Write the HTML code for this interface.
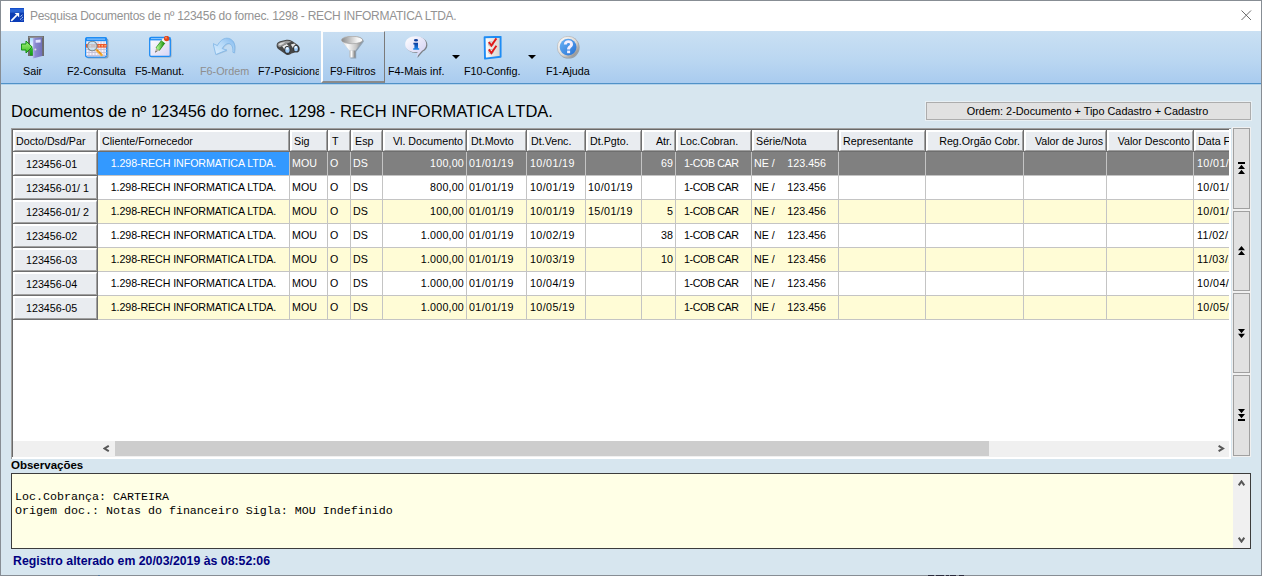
<!DOCTYPE html><html><head><meta charset="utf-8"><style>
*{margin:0;padding:0;box-sizing:border-box}
html,body{width:1276px;height:583px;overflow:hidden;background:#fff;font-family:"Liberation Sans",sans-serif;}
.a{position:absolute}
.t{position:absolute;white-space:nowrap;line-height:1}
</style></head><body>

<div class="a" style="left:0;top:0;width:1262px;height:576px;border:1px solid #878d94;background:#d7e6ef"></div>
<div class="a" style="left:1px;top:1px;width:1260px;height:30px;background:#fff"></div>
<svg class="a" style="left:10px;top:8px" width="14" height="14" viewBox="0 0 14 14">
<defs><linearGradient id="apg" x1="0" y1="0" x2="0" y2="1"><stop offset="0" stop-color="#0c44c4"/><stop offset="0.12" stop-color="#2a66d8"/><stop offset="0.3" stop-color="#2a62d0"/><stop offset="0.36" stop-color="#0c3cb0"/><stop offset="1" stop-color="#0a3cb8"/></linearGradient></defs>
<rect x="0" y="0" width="14" height="14" fill="url(#apg)"/>
<path d="M1.2 12.8 L6.8 7.2" stroke="#fff" stroke-width="1.7"/><path d="M4.6 5 L9.2 5 L9.2 9.6 Z" fill="#fff"/>
<path d="M10.5 8.5 L12.5 6.8 M10 11.5 L11.5 10.5 M12 12.5 L13 11.5 M11.8 9.8 L13 9" stroke="#b8d0f8" stroke-width="1"/>
</svg>
<div class="t" style="left:30px;top:10px;font-size:12px;letter-spacing:-0.28px;color:#939393">Pesquisa Documentos de nº 123456 do fornec. 1298 - RECH INFORMATICA LTDA.</div>
<svg class="a" style="left:1241px;top:10px" width="11" height="11" viewBox="0 0 11 11"><path d="M0.5 0.5 L10 10 M10 0.5 L0.5 10" stroke="#6a6a6a" stroke-width="1"/></svg>
<div class="a" style="left:1px;top:31px;width:1260px;height:52px;background:linear-gradient(#cae0f3,#b9d6f1 60%,#a9cbef)"></div>
<div class="a" style="left:1px;top:83px;width:1260px;height:1px;background:#5092c8"></div><div class="a" style="left:1px;top:84px;width:1260px;height:1px;background:#b4d2ea"></div><div class="a" style="left:1px;top:85px;width:1260px;height:1px;background:#d8e8f1"></div>
<div class="a" style="left:321px;top:31px;width:64px;height:52px;border-left:2px solid #fdfdfd;border-top:1px solid #fdfdfd;border-right:1px solid #7a7a7a;border-bottom:2px solid #8a8a8a;background:linear-gradient(#c8def2,#a9cbee)"></div>
<div class="t" style="left:23px;top:66px;font-size:10.8px;color:#000">Sair</div>
<div class="t" style="left:67px;top:66px;font-size:10.8px;color:#000">F2-Consulta</div>
<div class="t" style="left:135px;top:66px;font-size:10.8px;color:#000">F5-Manut.</div>
<div class="t" style="left:200px;top:66px;font-size:10.8px;color:#8e8e8e">F6-Ordem</div>
<div class="t" style="left:258px;top:66px;width:61px;overflow:hidden;font-size:10.8px;color:#000">F7-Posiciona</div>
<div class="t" style="left:330px;top:66px;font-size:10.8px;color:#000">F9-Filtros</div>
<div class="t" style="left:388px;top:66px;font-size:10.8px;color:#000">F4-Mais inf.</div>
<div class="t" style="left:464px;top:66px;font-size:10.8px;color:#000">F10-Config.</div>
<div class="t" style="left:546px;top:66px;font-size:10.8px;color:#000">F1-Ajuda</div>
<svg class="a" style="left:452px;top:55px" width="8" height="4" viewBox="0 0 8 4"><path d="M0 0 L8 0 L4 4 Z" fill="#000"/></svg>
<svg class="a" style="left:528px;top:55px" width="8" height="4" viewBox="0 0 8 4"><path d="M0 0 L8 0 L4 4 Z" fill="#000"/></svg>
<div class="a" style="left:21px;top:36px"><svg width="24" height="24" viewBox="0 0 24 24">
<defs><linearGradient id="op" x1="0" y1="0" x2="0" y2="1"><stop offset="0" stop-color="#a8dcff"/><stop offset="0.5" stop-color="#f4fbff"/><stop offset="0.62" stop-color="#2fb52f"/><stop offset="1" stop-color="#129a12"/></linearGradient>
<linearGradient id="dr" x1="0" y1="0" x2="1" y2="0"><stop offset="0" stop-color="#b4b4ec"/><stop offset="0.25" stop-color="#8a8ad0"/><stop offset="1" stop-color="#7070b8"/></linearGradient>
<linearGradient id="ar" x1="0" y1="0" x2="0" y2="1"><stop offset="0" stop-color="#a8f080"/><stop offset="1" stop-color="#3cc020"/></linearGradient></defs>
<rect x="7" y="0" width="16" height="20" fill="#6c6c6c"/><rect x="7.6" y="0.6" width="14" height="1.2" fill="#9a9a9a"/>
<rect x="9" y="2" width="3.5" height="17.5" fill="url(#op)"/>
<path d="M11.9 2 L21 1.2 L21.2 20 L11.9 22.5 Z" fill="url(#dr)"/>
<path d="M14.6 4 L19.6 3.6 L19.6 6.4 L14.6 6.8 Z" fill="#e4e4ff"/>
<circle cx="14.4" cy="13.6" r="1" fill="#e6e6e6"/>
<path d="M0.4 8 L5 8 L5 5 L11.2 11 L5 17 L5 14 L0.4 14 Z" fill="url(#ar)" stroke="#0f8f0f" stroke-width="1"/>
</svg></div>
<div class="a" style="left:85px;top:37px"><svg width="24" height="22" viewBox="0 0 24 22">
<rect x="1.5" y="1.5" width="22" height="20" rx="2" fill="#5a6a7a" fill-opacity="0.45"/>
<rect x="0.6" y="0.6" width="21" height="19.5" rx="1.8" fill="#f6f2fc" stroke="#1e8cf4" stroke-width="1.3"/>
<rect x="0.6" y="0.6" width="21" height="3.6" fill="#1e8cf4"/><rect x="2" y="1.6" width="18" height="1" fill="#9fd0ff"/>
<path d="M1 8.5 H21.5 M1 12.5 H21.5 M1 15.5 H21.5 M1 18.5 H21.5 M4 4 V20 M7 4 V20 M10 4 V20 M13 4 V20 M16 4 V20 M19 4 V20" stroke="#c4bfd6" stroke-width="0.9"/>
<rect x="1" y="7" width="20.6" height="3.6" fill="#f0582a"/>
<path d="M4.5 8 h1.5 v1.6 h-1.5 Z M10.5 8 h1.5 v1.6 h-1.5 Z M13.5 8 h1.5 v1.6 h-1.5 Z M16.5 8 h1.5 v1.6 h-1.5 Z M19.5 8 h1.2 v1.6 h-1.2 Z" fill="#f9c08a"/>
<circle cx="7.3" cy="9" r="4.8" fill="#bfe3f4" fill-opacity="0.75" stroke="#7f8a90" stroke-width="1.1"/>
<path d="M11.8 13.2 L16.6 17.8" stroke="#f2b030" stroke-width="2.5" stroke-linecap="round"/>
<path d="M12.4 13.4 L16.4 17.2" stroke="#e84a20" stroke-width="1" stroke-dasharray="1 1.1"/>
</svg></div>
<div class="a" style="left:149px;top:36px"><svg width="24" height="23" viewBox="0 0 24 23">
<rect x="1.5" y="2.5" width="21" height="19" rx="1.5" fill="#5a6a7a" fill-opacity="0.45"/>
<defs><linearGradient id="pg" x1="0" y1="0" x2="1" y2="1"><stop offset="0" stop-color="#ffffff"/><stop offset="1" stop-color="#d8d4f4"/></linearGradient>
<linearGradient id="gb" x1="0" y1="0" x2="1" y2="0"><stop offset="0" stop-color="#a8f48a"/><stop offset="1" stop-color="#2a9a1a"/></linearGradient></defs>
<rect x="0.7" y="1.4" width="20.6" height="19" rx="1.5" fill="url(#pg)" stroke="#1e8cf4" stroke-width="1.3"/>
<rect x="0.7" y="1.4" width="20.6" height="3" fill="#1e8cf4"/><rect x="2" y="2.2" width="17" height="0.9" fill="#9fd0ff"/>
<path d="M6.2 16.4 L7 12.2 L10.2 14.4 Z" fill="#b8b0a0"/><path d="M6 16.8 L6.8 14.8 L7.8 15.6 Z" fill="#444"/>
<path d="M8.6 13.2 L14.4 5.6" stroke="#2a8a1a" stroke-width="5"/>
<path d="M8.6 13.2 L14.4 5.6" stroke="url(#gb)" stroke-width="3.6"/>
<path d="M14.2 5.8 L16 3.6" stroke="#f4f4f4" stroke-width="4.8"/>
<circle cx="17.6" cy="2.5" r="2.7" fill="#e2481c"/><circle cx="17" cy="1.8" r="1" fill="#f88a60"/>
</svg></div>
<div class="a" style="left:213px;top:37px"><svg width="24" height="22" viewBox="0 0 24 22">
<defs><linearGradient id="ua" x1="0" y1="1" x2="1" y2="0"><stop offset="0" stop-color="#dcefff"/><stop offset="0.55" stop-color="#b4d8f8"/><stop offset="1" stop-color="#80b8ee"/></linearGradient></defs>
<path d="M0.9 7.4 L5.2 9.4 C7.3 5.3 10.8 2 14.7 2 C19.3 2 22.6 5.8 22.6 10.8 C22.6 13.3 22.3 15.3 22.1 16.6 L20.7 16.1 C20.9 13.8 20.7 9.6 18.4 8 C16.6 6.6 13 7 10 12.4 L14.7 13.9 L3.6 18.3 Z" fill="#7a9ab8" fill-opacity="0.35"/>
<path d="M0.1 6.6 L4.4 8.6 C6.5 4.5 10 1.2 13.9 1.2 C18.5 1.2 21.8 5 21.8 10 C21.8 12.5 21.5 14.5 21.3 15.8 L19.9 15.3 C20.1 13 19.9 8.8 17.6 7.2 C15.8 5.8 12.2 6.2 9.2 11.6 L13.9 13.1 L2.8 17.5 Z" fill="url(#ua)" stroke="#7cb4e6" stroke-width="0.8" stroke-linejoin="round"/>
</svg></div>
<div class="a" style="left:274px;top:35px"><svg width="28" height="22" viewBox="0 0 28 22">
<path d="M2.6 10.5 C2.6 8.4 4 6.8 6 6.2 L12.5 4.8 C14.5 4.6 16.5 5 18.5 6.2 L23.5 9.7 C25.5 11.2 26 13.2 25.6 15.2 C25 17.4 23 18 21 17.4 L17.5 18.6 C16 20.2 13.5 20.4 12 19.4 L4.5 14.2 C3.2 13.2 2.6 12 2.6 10.5 Z" fill="#464646"/>
<path d="M3.6 10 C3.8 8.4 5 7.6 6.6 7.2 L12.6 5.8 C14.4 5.6 16 6 17.4 6.8 L13.2 8.4 L8.6 10.8 L5.8 12.2 C4.5 11.6 3.6 11 3.6 10 Z" fill="#9a9a9a"/>
<path d="M4.6 9.6 C5 8.6 6 8.1 7.4 7.8 L11.2 7 L9 9 L6 10.6 Z" fill="#dadada"/>
<path d="M8.2 11.2 L12.8 9 L16 12.4 L12 16.4 Z" fill="#ededed"/>
<path d="M16.8 9.4 L20.4 8.4 L23 11.4 L19.8 14.4 Z" fill="#e6e6e6"/>
<ellipse cx="13.3" cy="14.9" rx="3" ry="3.8" fill="#2e2e2e"/>
<ellipse cx="13.4" cy="14.9" rx="2.2" ry="2.9" fill="#9ecbf8"/><ellipse cx="13.2" cy="13.5" rx="1.3" ry="1.3" fill="#eaf5ff"/>
<ellipse cx="21.9" cy="13.5" rx="2.8" ry="3.5" fill="#2e2e2e"/>
<ellipse cx="22" cy="13.5" rx="2" ry="2.7" fill="#9ecbf8"/><ellipse cx="21.8" cy="12.2" rx="1.2" ry="1.2" fill="#eaf5ff"/>
</svg></div>
<div class="a" style="left:341px;top:36px"><svg width="25" height="24" viewBox="0 0 25 24">
<defs><linearGradient id="cn" x1="0" y1="0" x2="1" y2="0"><stop offset="0" stop-color="#d8d8d8"/><stop offset="0.3" stop-color="#fafafa"/><stop offset="0.7" stop-color="#c4c4c4"/><stop offset="1" stop-color="#7a7a7a"/></linearGradient>
<linearGradient id="sp" x1="0" y1="0" x2="1" y2="0"><stop offset="0" stop-color="#b8b8b8"/><stop offset="0.35" stop-color="#fafafa"/><stop offset="1" stop-color="#7a7a7a"/></linearGradient>
<linearGradient id="in" x1="0" y1="0" x2="1" y2="0"><stop offset="0" stop-color="#8a8a8a"/><stop offset="0.75" stop-color="#f4f4f4"/><stop offset="1" stop-color="#ffffff"/></linearGradient></defs>
<path d="M1.3 5.5 C1.3 3 6 1 12.1 1 C18.2 1 22.9 3 22.9 5.5 L15.2 15.8 L15.2 22.5 L9.5 22.5 L9.5 15.8 Z" fill="#404040" fill-opacity="0.35"/>
<path d="M0.3 4.5 C0.3 2 5 0.1 11.1 0.1 C17.2 0.1 21.9 2 21.9 4.5 L14.2 14.8 L8.5 14.8 Z" fill="url(#cn)"/>
<ellipse cx="11.1" cy="4" rx="10.6" ry="3.7" fill="url(#in)" stroke="#9a9a9a" stroke-width="0.6"/>
<path d="M8.5 14.6 L14.2 14.6 L14.2 21.5 L8.5 21.5 Z" fill="url(#sp)"/>
</svg></div>
<div class="a" style="left:405px;top:36px"><svg width="24" height="23" viewBox="0 0 24 23">
<defs><linearGradient id="bb" x1="0" y1="0" x2="1" y2="1"><stop offset="0" stop-color="#ffffff"/><stop offset="1" stop-color="#cfcdf2"/></linearGradient>
<linearGradient id="ib" x1="0" y1="0" x2="0" y2="1"><stop offset="0" stop-color="#0a3a9a"/><stop offset="1" stop-color="#1c8cf0"/></linearGradient></defs>
<path d="M11.8 1 C18 1 22.4 4 22.4 9 C22.4 12.2 20.4 14.4 18 15.6 L12.4 22 L13.6 17 C6 17.4 1 14 1 9 C1 4 5.6 1 11.8 1 Z" fill="#6a6a6a" fill-opacity="0.8"/>
<path d="M10.8 0.2 C17 0.2 21.2 3.2 21.2 8.2 C21.2 11.4 19.2 13.6 17 14.8 L11.2 21.2 L12.6 16.2 C5 16.6 0.2 13.2 0.2 8.2 C0.2 3.2 4.6 0.2 10.8 0.2 Z" fill="url(#bb)"/>
<ellipse cx="11" cy="4.3" rx="2.1" ry="1.3" fill="#0c3f9e"/>
<path d="M8.4 6.8 H13 V12.2 H14.2 V13.8 H8.2 V12.2 H9.4 V8.4 H8.4 Z" fill="url(#ib)"/>
</svg></div>
<div class="a" style="left:483px;top:36px"><svg width="20" height="24" viewBox="0 0 20 24">
<defs><linearGradient id="ck" x1="0" y1="0" x2="1" y2="0"><stop offset="0" stop-color="#ffffff"/><stop offset="0.5" stop-color="#ebe7e3"/><stop offset="1" stop-color="#d8d4d0"/></linearGradient></defs>
<path d="M1.6 1.2 L17.6 0.8 L17.6 20.8 L2 22.6 Z" fill="url(#ck)" stroke="#1e8cf4" stroke-width="1.9" stroke-linejoin="round"/>
<ellipse cx="8" cy="8" rx="2.6" ry="2.2" fill="none" stroke="#b8b8b8" stroke-width="0.9"/>
<ellipse cx="8" cy="15.6" rx="2.6" ry="2.2" fill="none" stroke="#b8b8b8" stroke-width="0.9"/>
<path d="M5.8 6 L8.4 9.6 L13.4 2.4" stroke="#e01a1a" stroke-width="1.9" fill="none"/>
<path d="M5.8 13.4 L8.4 17 L13.4 9.8" stroke="#e01a1a" stroke-width="1.9" fill="none"/>
</svg></div>
<div class="a" style="left:557px;top:36px"><svg width="24" height="24" viewBox="0 0 24 24">
<defs><linearGradient id="rg" x1="0" y1="0" x2="1" y2="1"><stop offset="0" stop-color="#ffffff"/><stop offset="0.55" stop-color="#dedad6"/><stop offset="1" stop-color="#707070"/></linearGradient>
<linearGradient id="hb" x1="0" y1="0" x2="1" y2="1"><stop offset="0" stop-color="#6cb4f6"/><stop offset="1" stop-color="#2470d4"/></linearGradient></defs>
<circle cx="11.6" cy="11.6" r="11" fill="#5a5a5a" fill-opacity="0.45"/>
<circle cx="11.1" cy="11.1" r="10.8" fill="url(#rg)" stroke="#a8a8a8" stroke-width="0.5"/>
<circle cx="11.1" cy="11.1" r="8.4" fill="url(#hb)"/>
<path d="M6.9 8.4 C6.9 5.4 9 4.2 11.4 4.2 C14.2 4.2 16 5.8 16 8.2 C16 11.2 13.1 11.4 13.1 13.6 L10.1 13.6 C10.1 10 13 9.8 13 8.3 C13 7.5 12.4 7 11.4 7 C10.4 7 9.8 7.6 9.8 8.6 Z" fill="#f4f0ff"/>
<rect x="10.1" y="14.6" width="3" height="2.6" fill="#f4f0ff"/>
</svg></div>
<div class="t" style="left:11px;top:103px;font-size:16.5px;color:#000">Documentos de nº 123456 do fornec. 1298 - RECH INFORMATICA LTDA.</div>
<div class="a" style="left:926px;top:102px;width:325px;height:18px;border:1px solid #adadad;background:#e1e1e1;box-shadow:0 0 0 1px #e9f0f4"></div>
<div class="t" style="left:925px;top:106px;width:325px;text-align:center;font-size:10.9px;color:#000">Ordem: 2-Documento + Tipo Cadastro + Cadastro</div>
<div class="a" style="left:11px;top:128px;width:1220px;height:331px;background:#fff;border-top:1px solid #a0a0a0;border-left:1px solid #a0a0a0"></div>
<div class="a" style="left:12px;top:129px;width:1217px;height:1px;background:#696969"></div><div class="a" style="left:12px;top:129px;width:1px;height:328px;background:#696969"></div>
<div class="a" id="gridclip" style="left:13px;top:130px;width:1216px;height:310px;overflow:hidden">
<div class="a" style="left:0px;top:0px;width:84px;height:21px;background:#e9ecf0;border-left:2px solid #fff;border-top:2px solid #fff;border-right:1px solid #a0a0a0;border-bottom:1px solid #a0a0a0"></div>
<div class="a" style="left:84px;top:0px;width:1px;height:22px;background:#6e6e6e"></div>
<div class="t" style="left:3px;top:6px;font-size:10.7px;color:#000;">Docto/Dsd/Par</div>
<div class="a" style="left:85px;top:0px;width:191px;height:21px;background:#e9ecf0;border-left:2px solid #fff;border-top:2px solid #fff;border-right:1px solid #a0a0a0;border-bottom:1px solid #a0a0a0"></div>
<div class="a" style="left:276px;top:0px;width:1px;height:22px;background:#6e6e6e"></div>
<div class="t" style="left:89px;top:6px;font-size:10.7px;color:#000;">Cliente/Fornecedor</div>
<div class="a" style="left:277px;top:0px;width:37px;height:21px;background:#e9ecf0;border-left:2px solid #fff;border-top:2px solid #fff;border-right:1px solid #a0a0a0;border-bottom:1px solid #a0a0a0"></div>
<div class="a" style="left:314px;top:0px;width:1px;height:22px;background:#6e6e6e"></div>
<div class="t" style="left:281px;top:6px;font-size:10.7px;color:#000;">Sig</div>
<div class="a" style="left:315px;top:0px;width:22px;height:21px;background:#e9ecf0;border-left:2px solid #fff;border-top:2px solid #fff;border-right:1px solid #a0a0a0;border-bottom:1px solid #a0a0a0"></div>
<div class="a" style="left:337px;top:0px;width:1px;height:22px;background:#6e6e6e"></div>
<div class="t" style="left:319px;top:6px;font-size:10.7px;color:#000;">T</div>
<div class="a" style="left:338px;top:0px;width:31px;height:21px;background:#e9ecf0;border-left:2px solid #fff;border-top:2px solid #fff;border-right:1px solid #a0a0a0;border-bottom:1px solid #a0a0a0"></div>
<div class="a" style="left:369px;top:0px;width:1px;height:22px;background:#6e6e6e"></div>
<div class="t" style="left:342px;top:6px;font-size:10.7px;color:#000;">Esp</div>
<div class="a" style="left:370px;top:0px;width:83px;height:21px;background:#e9ecf0;border-left:2px solid #fff;border-top:2px solid #fff;border-right:1px solid #a0a0a0;border-bottom:1px solid #a0a0a0"></div>
<div class="a" style="left:453px;top:0px;width:1px;height:22px;background:#6e6e6e"></div>
<div class="t" style="left:370px;width:80px;text-align:right;top:6px;font-size:10.7px;color:#000;">Vl. Documento</div>
<div class="a" style="left:454px;top:0px;width:59px;height:21px;background:#e9ecf0;border-left:2px solid #fff;border-top:2px solid #fff;border-right:1px solid #a0a0a0;border-bottom:1px solid #a0a0a0"></div>
<div class="a" style="left:513px;top:0px;width:1px;height:22px;background:#6e6e6e"></div>
<div class="t" style="left:458px;top:6px;font-size:10.7px;color:#000;">Dt.Movto</div>
<div class="a" style="left:514px;top:0px;width:58px;height:21px;background:#e9ecf0;border-left:2px solid #fff;border-top:2px solid #fff;border-right:1px solid #a0a0a0;border-bottom:1px solid #a0a0a0"></div>
<div class="a" style="left:572px;top:0px;width:1px;height:22px;background:#6e6e6e"></div>
<div class="t" style="left:518px;top:6px;font-size:10.7px;color:#000;">Dt.Venc.</div>
<div class="a" style="left:573px;top:0px;width:55px;height:21px;background:#e9ecf0;border-left:2px solid #fff;border-top:2px solid #fff;border-right:1px solid #a0a0a0;border-bottom:1px solid #a0a0a0"></div>
<div class="a" style="left:628px;top:0px;width:1px;height:22px;background:#6e6e6e"></div>
<div class="t" style="left:577px;top:6px;font-size:10.7px;color:#000;">Dt.Pgto.</div>
<div class="a" style="left:629px;top:0px;width:33px;height:21px;background:#e9ecf0;border-left:2px solid #fff;border-top:2px solid #fff;border-right:1px solid #a0a0a0;border-bottom:1px solid #a0a0a0"></div>
<div class="a" style="left:662px;top:0px;width:1px;height:22px;background:#6e6e6e"></div>
<div class="t" style="left:629px;width:30px;text-align:right;top:6px;font-size:10.7px;color:#000;">Atr.</div>
<div class="a" style="left:663px;top:0px;width:75px;height:21px;background:#e9ecf0;border-left:2px solid #fff;border-top:2px solid #fff;border-right:1px solid #a0a0a0;border-bottom:1px solid #a0a0a0"></div>
<div class="a" style="left:738px;top:0px;width:1px;height:22px;background:#6e6e6e"></div>
<div class="t" style="left:667px;top:6px;font-size:10.7px;color:#000;">Loc.Cobran.</div>
<div class="a" style="left:739px;top:0px;width:86px;height:21px;background:#e9ecf0;border-left:2px solid #fff;border-top:2px solid #fff;border-right:1px solid #a0a0a0;border-bottom:1px solid #a0a0a0"></div>
<div class="a" style="left:825px;top:0px;width:1px;height:22px;background:#6e6e6e"></div>
<div class="t" style="left:743px;top:6px;font-size:10.7px;color:#000;">Série/Nota</div>
<div class="a" style="left:826px;top:0px;width:86px;height:21px;background:#e9ecf0;border-left:2px solid #fff;border-top:2px solid #fff;border-right:1px solid #a0a0a0;border-bottom:1px solid #a0a0a0"></div>
<div class="a" style="left:912px;top:0px;width:1px;height:22px;background:#6e6e6e"></div>
<div class="t" style="left:830px;top:6px;font-size:10.7px;color:#000;">Representante</div>
<div class="a" style="left:913px;top:0px;width:97px;height:21px;background:#e9ecf0;border-left:2px solid #fff;border-top:2px solid #fff;border-right:1px solid #a0a0a0;border-bottom:1px solid #a0a0a0"></div>
<div class="a" style="left:1010px;top:0px;width:1px;height:22px;background:#6e6e6e"></div>
<div class="t" style="left:913px;width:94px;text-align:right;top:6px;font-size:10.7px;color:#000;">Reg.Orgão Cobr.</div>
<div class="a" style="left:1011px;top:0px;width:82px;height:21px;background:#e9ecf0;border-left:2px solid #fff;border-top:2px solid #fff;border-right:1px solid #a0a0a0;border-bottom:1px solid #a0a0a0"></div>
<div class="a" style="left:1093px;top:0px;width:1px;height:22px;background:#6e6e6e"></div>
<div class="t" style="left:1011px;width:79px;text-align:right;top:6px;font-size:10.7px;color:#000;">Valor de Juros</div>
<div class="a" style="left:1094px;top:0px;width:86px;height:21px;background:#e9ecf0;border-left:2px solid #fff;border-top:2px solid #fff;border-right:1px solid #a0a0a0;border-bottom:1px solid #a0a0a0"></div>
<div class="a" style="left:1180px;top:0px;width:1px;height:22px;background:#6e6e6e"></div>
<div class="t" style="left:1094px;width:83px;text-align:right;top:6px;font-size:10.7px;color:#000;">Valor Desconto</div>
<div class="a" style="left:1181px;top:0px;width:95px;height:21px;background:#e9ecf0;border-left:2px solid #fff;border-top:2px solid #fff;border-right:1px solid #a0a0a0;border-bottom:1px solid #a0a0a0"></div>
<div class="a" style="left:1276px;top:0px;width:1px;height:22px;background:#6e6e6e"></div>
<div class="t" style="left:1185px;top:6px;font-size:10.7px;color:#000;">Data F</div>
<div class="a" style="left:0px;top:21px;width:1277px;height:1px;background:#6e6e6e"></div>
<div class="a" style="left:0px;top:22px;width:84px;height:23px;background:#e9ecf0;border-left:2px solid #fff;border-top:2px solid #fff;border-right:1px solid #a0a0a0;border-bottom:1px solid #a0a0a0"></div>
<div class="a" style="left:84px;top:22px;width:1px;height:24px;background:#6e6e6e"></div>
<div class="a" style="left:0px;top:45px;width:85px;height:1px;background:#6e6e6e"></div>
<div class="t" style="left:13px;top:29px;font-size:10.7px;color:#000;">123456-01</div>
<div class="a" style="left:85px;top:22px;width:191px;height:23px;background:#3399ff"></div>
<div class="a" style="left:276px;top:22px;width:1px;height:24px;background:#c4c4c4"></div>
<div class="a" style="left:85px;top:45px;width:192px;height:1px;background:#c4c4c4"></div>
<div class="t" style="left:85px;width:191px;text-align:center;top:28px;font-size:10.7px;color:#fff;letter-spacing:-0.1px">1.298-RECH INFORMATICA LTDA.</div>
<div class="a" style="left:277px;top:22px;width:37px;height:23px;background:#808080"></div>
<div class="a" style="left:314px;top:22px;width:1px;height:24px;background:#c4c4c4"></div>
<div class="a" style="left:277px;top:45px;width:38px;height:1px;background:#c4c4c4"></div>
<div class="t" style="left:279px;top:28px;font-size:10.7px;color:#fff;">MOU</div>
<div class="a" style="left:315px;top:22px;width:22px;height:23px;background:#808080"></div>
<div class="a" style="left:337px;top:22px;width:1px;height:24px;background:#c4c4c4"></div>
<div class="a" style="left:315px;top:45px;width:23px;height:1px;background:#c4c4c4"></div>
<div class="t" style="left:317px;top:28px;font-size:10.7px;color:#fff;">O</div>
<div class="a" style="left:338px;top:22px;width:31px;height:23px;background:#808080"></div>
<div class="a" style="left:369px;top:22px;width:1px;height:24px;background:#c4c4c4"></div>
<div class="a" style="left:338px;top:45px;width:32px;height:1px;background:#c4c4c4"></div>
<div class="t" style="left:340px;top:28px;font-size:10.7px;color:#fff;">DS</div>
<div class="a" style="left:370px;top:22px;width:83px;height:23px;background:#808080"></div>
<div class="a" style="left:453px;top:22px;width:1px;height:24px;background:#c4c4c4"></div>
<div class="a" style="left:370px;top:45px;width:84px;height:1px;background:#c4c4c4"></div>
<div class="t" style="left:370px;width:81px;text-align:right;top:28px;font-size:10.7px;color:#fff;letter-spacing:0.2px">100,00</div>
<div class="a" style="left:454px;top:22px;width:59px;height:23px;background:#808080"></div>
<div class="a" style="left:513px;top:22px;width:1px;height:24px;background:#c4c4c4"></div>
<div class="a" style="left:454px;top:45px;width:60px;height:1px;background:#c4c4c4"></div>
<div class="t" style="left:456px;top:28px;font-size:10.7px;color:#fff;letter-spacing:0.4px">01/01/19</div>
<div class="a" style="left:514px;top:22px;width:58px;height:23px;background:#808080"></div>
<div class="a" style="left:572px;top:22px;width:1px;height:24px;background:#c4c4c4"></div>
<div class="a" style="left:514px;top:45px;width:59px;height:1px;background:#c4c4c4"></div>
<div class="t" style="left:517px;top:28px;font-size:10.7px;color:#fff;letter-spacing:0.4px">10/01/19</div>
<div class="a" style="left:573px;top:22px;width:55px;height:23px;background:#808080"></div>
<div class="a" style="left:628px;top:22px;width:1px;height:24px;background:#c4c4c4"></div>
<div class="a" style="left:573px;top:45px;width:56px;height:1px;background:#c4c4c4"></div>
<div class="a" style="left:629px;top:22px;width:33px;height:23px;background:#808080"></div>
<div class="a" style="left:662px;top:22px;width:1px;height:24px;background:#c4c4c4"></div>
<div class="a" style="left:629px;top:45px;width:34px;height:1px;background:#c4c4c4"></div>
<div class="t" style="left:629px;width:31px;text-align:right;top:28px;font-size:10.7px;color:#fff;">69</div>
<div class="a" style="left:663px;top:22px;width:75px;height:23px;background:#808080"></div>
<div class="a" style="left:738px;top:22px;width:1px;height:24px;background:#c4c4c4"></div>
<div class="a" style="left:663px;top:45px;width:76px;height:1px;background:#c4c4c4"></div>
<div class="t" style="left:671px;top:28px;font-size:10.7px;color:#fff;letter-spacing:-0.4px">1-COB CAR</div>
<div class="a" style="left:739px;top:22px;width:86px;height:23px;background:#808080"></div>
<div class="a" style="left:825px;top:22px;width:1px;height:24px;background:#c4c4c4"></div>
<div class="a" style="left:739px;top:45px;width:87px;height:1px;background:#c4c4c4"></div>
<div class="t" style="left:741px;top:28px;font-size:10.7px;color:#fff;">NE /</div>
<div class="t" style="left:739px;width:74px;text-align:right;top:28px;font-size:10.7px;color:#fff;">123.456</div>
<div class="a" style="left:826px;top:22px;width:86px;height:23px;background:#808080"></div>
<div class="a" style="left:912px;top:22px;width:1px;height:24px;background:#c4c4c4"></div>
<div class="a" style="left:826px;top:45px;width:87px;height:1px;background:#c4c4c4"></div>
<div class="a" style="left:913px;top:22px;width:97px;height:23px;background:#808080"></div>
<div class="a" style="left:1010px;top:22px;width:1px;height:24px;background:#c4c4c4"></div>
<div class="a" style="left:913px;top:45px;width:98px;height:1px;background:#c4c4c4"></div>
<div class="a" style="left:1011px;top:22px;width:82px;height:23px;background:#808080"></div>
<div class="a" style="left:1093px;top:22px;width:1px;height:24px;background:#c4c4c4"></div>
<div class="a" style="left:1011px;top:45px;width:83px;height:1px;background:#c4c4c4"></div>
<div class="a" style="left:1094px;top:22px;width:86px;height:23px;background:#808080"></div>
<div class="a" style="left:1180px;top:22px;width:1px;height:24px;background:#c4c4c4"></div>
<div class="a" style="left:1094px;top:45px;width:87px;height:1px;background:#c4c4c4"></div>
<div class="a" style="left:1181px;top:22px;width:95px;height:23px;background:#808080"></div>
<div class="a" style="left:1276px;top:22px;width:1px;height:24px;background:#c4c4c4"></div>
<div class="a" style="left:1181px;top:45px;width:96px;height:1px;background:#c4c4c4"></div>
<div class="t" style="left:1184px;top:28px;font-size:10.7px;color:#fff;letter-spacing:0.4px">10/01/19</div>
<div class="a" style="left:0px;top:46px;width:84px;height:23px;background:#e9ecf0;border-left:2px solid #fff;border-top:2px solid #fff;border-right:1px solid #a0a0a0;border-bottom:1px solid #a0a0a0"></div>
<div class="a" style="left:84px;top:46px;width:1px;height:24px;background:#6e6e6e"></div>
<div class="a" style="left:0px;top:69px;width:85px;height:1px;background:#6e6e6e"></div>
<div class="t" style="left:13px;top:53px;font-size:10.7px;color:#000;">123456-01/ 1</div>
<div class="a" style="left:85px;top:46px;width:191px;height:23px;background:#ffffff"></div>
<div class="a" style="left:276px;top:46px;width:1px;height:24px;background:#c4c4c4"></div>
<div class="a" style="left:85px;top:69px;width:192px;height:1px;background:#c4c4c4"></div>
<div class="t" style="left:85px;width:191px;text-align:center;top:52px;font-size:10.7px;color:#000;letter-spacing:-0.1px">1.298-RECH INFORMATICA LTDA.</div>
<div class="a" style="left:277px;top:46px;width:37px;height:23px;background:#ffffff"></div>
<div class="a" style="left:314px;top:46px;width:1px;height:24px;background:#c4c4c4"></div>
<div class="a" style="left:277px;top:69px;width:38px;height:1px;background:#c4c4c4"></div>
<div class="t" style="left:279px;top:52px;font-size:10.7px;color:#000;">MOU</div>
<div class="a" style="left:315px;top:46px;width:22px;height:23px;background:#ffffff"></div>
<div class="a" style="left:337px;top:46px;width:1px;height:24px;background:#c4c4c4"></div>
<div class="a" style="left:315px;top:69px;width:23px;height:1px;background:#c4c4c4"></div>
<div class="t" style="left:317px;top:52px;font-size:10.7px;color:#000;">O</div>
<div class="a" style="left:338px;top:46px;width:31px;height:23px;background:#ffffff"></div>
<div class="a" style="left:369px;top:46px;width:1px;height:24px;background:#c4c4c4"></div>
<div class="a" style="left:338px;top:69px;width:32px;height:1px;background:#c4c4c4"></div>
<div class="t" style="left:340px;top:52px;font-size:10.7px;color:#000;">DS</div>
<div class="a" style="left:370px;top:46px;width:83px;height:23px;background:#ffffff"></div>
<div class="a" style="left:453px;top:46px;width:1px;height:24px;background:#c4c4c4"></div>
<div class="a" style="left:370px;top:69px;width:84px;height:1px;background:#c4c4c4"></div>
<div class="t" style="left:370px;width:81px;text-align:right;top:52px;font-size:10.7px;color:#000;letter-spacing:0.2px">800,00</div>
<div class="a" style="left:454px;top:46px;width:59px;height:23px;background:#ffffff"></div>
<div class="a" style="left:513px;top:46px;width:1px;height:24px;background:#c4c4c4"></div>
<div class="a" style="left:454px;top:69px;width:60px;height:1px;background:#c4c4c4"></div>
<div class="t" style="left:456px;top:52px;font-size:10.7px;color:#000;letter-spacing:0.4px">01/01/19</div>
<div class="a" style="left:514px;top:46px;width:58px;height:23px;background:#ffffff"></div>
<div class="a" style="left:572px;top:46px;width:1px;height:24px;background:#c4c4c4"></div>
<div class="a" style="left:514px;top:69px;width:59px;height:1px;background:#c4c4c4"></div>
<div class="t" style="left:517px;top:52px;font-size:10.7px;color:#000;letter-spacing:0.4px">10/01/19</div>
<div class="a" style="left:573px;top:46px;width:55px;height:23px;background:#ffffff"></div>
<div class="a" style="left:628px;top:46px;width:1px;height:24px;background:#c4c4c4"></div>
<div class="a" style="left:573px;top:69px;width:56px;height:1px;background:#c4c4c4"></div>
<div class="t" style="left:575px;top:52px;font-size:10.7px;color:#000;letter-spacing:0.4px">10/01/19</div>
<div class="a" style="left:629px;top:46px;width:33px;height:23px;background:#ffffff"></div>
<div class="a" style="left:662px;top:46px;width:1px;height:24px;background:#c4c4c4"></div>
<div class="a" style="left:629px;top:69px;width:34px;height:1px;background:#c4c4c4"></div>
<div class="a" style="left:663px;top:46px;width:75px;height:23px;background:#ffffff"></div>
<div class="a" style="left:738px;top:46px;width:1px;height:24px;background:#c4c4c4"></div>
<div class="a" style="left:663px;top:69px;width:76px;height:1px;background:#c4c4c4"></div>
<div class="t" style="left:671px;top:52px;font-size:10.7px;color:#000;letter-spacing:-0.4px">1-COB CAR</div>
<div class="a" style="left:739px;top:46px;width:86px;height:23px;background:#ffffff"></div>
<div class="a" style="left:825px;top:46px;width:1px;height:24px;background:#c4c4c4"></div>
<div class="a" style="left:739px;top:69px;width:87px;height:1px;background:#c4c4c4"></div>
<div class="t" style="left:741px;top:52px;font-size:10.7px;color:#000;">NE /</div>
<div class="t" style="left:739px;width:74px;text-align:right;top:52px;font-size:10.7px;color:#000;">123.456</div>
<div class="a" style="left:826px;top:46px;width:86px;height:23px;background:#ffffff"></div>
<div class="a" style="left:912px;top:46px;width:1px;height:24px;background:#c4c4c4"></div>
<div class="a" style="left:826px;top:69px;width:87px;height:1px;background:#c4c4c4"></div>
<div class="a" style="left:913px;top:46px;width:97px;height:23px;background:#ffffff"></div>
<div class="a" style="left:1010px;top:46px;width:1px;height:24px;background:#c4c4c4"></div>
<div class="a" style="left:913px;top:69px;width:98px;height:1px;background:#c4c4c4"></div>
<div class="a" style="left:1011px;top:46px;width:82px;height:23px;background:#ffffff"></div>
<div class="a" style="left:1093px;top:46px;width:1px;height:24px;background:#c4c4c4"></div>
<div class="a" style="left:1011px;top:69px;width:83px;height:1px;background:#c4c4c4"></div>
<div class="a" style="left:1094px;top:46px;width:86px;height:23px;background:#ffffff"></div>
<div class="a" style="left:1180px;top:46px;width:1px;height:24px;background:#c4c4c4"></div>
<div class="a" style="left:1094px;top:69px;width:87px;height:1px;background:#c4c4c4"></div>
<div class="a" style="left:1181px;top:46px;width:95px;height:23px;background:#ffffff"></div>
<div class="a" style="left:1276px;top:46px;width:1px;height:24px;background:#c4c4c4"></div>
<div class="a" style="left:1181px;top:69px;width:96px;height:1px;background:#c4c4c4"></div>
<div class="t" style="left:1184px;top:52px;font-size:10.7px;color:#000;letter-spacing:0.4px">10/01/19</div>
<div class="a" style="left:0px;top:70px;width:84px;height:23px;background:#e9ecf0;border-left:2px solid #fff;border-top:2px solid #fff;border-right:1px solid #a0a0a0;border-bottom:1px solid #a0a0a0"></div>
<div class="a" style="left:84px;top:70px;width:1px;height:24px;background:#6e6e6e"></div>
<div class="a" style="left:0px;top:93px;width:85px;height:1px;background:#6e6e6e"></div>
<div class="t" style="left:13px;top:77px;font-size:10.7px;color:#000;">123456-01/ 2</div>
<div class="a" style="left:85px;top:70px;width:191px;height:23px;background:#fffcd6"></div>
<div class="a" style="left:276px;top:70px;width:1px;height:24px;background:#c4c4c4"></div>
<div class="a" style="left:85px;top:93px;width:192px;height:1px;background:#c4c4c4"></div>
<div class="t" style="left:85px;width:191px;text-align:center;top:76px;font-size:10.7px;color:#000;letter-spacing:-0.1px">1.298-RECH INFORMATICA LTDA.</div>
<div class="a" style="left:277px;top:70px;width:37px;height:23px;background:#fffcd6"></div>
<div class="a" style="left:314px;top:70px;width:1px;height:24px;background:#c4c4c4"></div>
<div class="a" style="left:277px;top:93px;width:38px;height:1px;background:#c4c4c4"></div>
<div class="t" style="left:279px;top:76px;font-size:10.7px;color:#000;">MOU</div>
<div class="a" style="left:315px;top:70px;width:22px;height:23px;background:#fffcd6"></div>
<div class="a" style="left:337px;top:70px;width:1px;height:24px;background:#c4c4c4"></div>
<div class="a" style="left:315px;top:93px;width:23px;height:1px;background:#c4c4c4"></div>
<div class="t" style="left:317px;top:76px;font-size:10.7px;color:#000;">O</div>
<div class="a" style="left:338px;top:70px;width:31px;height:23px;background:#fffcd6"></div>
<div class="a" style="left:369px;top:70px;width:1px;height:24px;background:#c4c4c4"></div>
<div class="a" style="left:338px;top:93px;width:32px;height:1px;background:#c4c4c4"></div>
<div class="t" style="left:340px;top:76px;font-size:10.7px;color:#000;">DS</div>
<div class="a" style="left:370px;top:70px;width:83px;height:23px;background:#fffcd6"></div>
<div class="a" style="left:453px;top:70px;width:1px;height:24px;background:#c4c4c4"></div>
<div class="a" style="left:370px;top:93px;width:84px;height:1px;background:#c4c4c4"></div>
<div class="t" style="left:370px;width:81px;text-align:right;top:76px;font-size:10.7px;color:#000;letter-spacing:0.2px">100,00</div>
<div class="a" style="left:454px;top:70px;width:59px;height:23px;background:#fffcd6"></div>
<div class="a" style="left:513px;top:70px;width:1px;height:24px;background:#c4c4c4"></div>
<div class="a" style="left:454px;top:93px;width:60px;height:1px;background:#c4c4c4"></div>
<div class="t" style="left:456px;top:76px;font-size:10.7px;color:#000;letter-spacing:0.4px">01/01/19</div>
<div class="a" style="left:514px;top:70px;width:58px;height:23px;background:#fffcd6"></div>
<div class="a" style="left:572px;top:70px;width:1px;height:24px;background:#c4c4c4"></div>
<div class="a" style="left:514px;top:93px;width:59px;height:1px;background:#c4c4c4"></div>
<div class="t" style="left:517px;top:76px;font-size:10.7px;color:#000;letter-spacing:0.4px">10/01/19</div>
<div class="a" style="left:573px;top:70px;width:55px;height:23px;background:#fffcd6"></div>
<div class="a" style="left:628px;top:70px;width:1px;height:24px;background:#c4c4c4"></div>
<div class="a" style="left:573px;top:93px;width:56px;height:1px;background:#c4c4c4"></div>
<div class="t" style="left:575px;top:76px;font-size:10.7px;color:#000;letter-spacing:0.4px">15/01/19</div>
<div class="a" style="left:629px;top:70px;width:33px;height:23px;background:#fffcd6"></div>
<div class="a" style="left:662px;top:70px;width:1px;height:24px;background:#c4c4c4"></div>
<div class="a" style="left:629px;top:93px;width:34px;height:1px;background:#c4c4c4"></div>
<div class="t" style="left:629px;width:31px;text-align:right;top:76px;font-size:10.7px;color:#000;">5</div>
<div class="a" style="left:663px;top:70px;width:75px;height:23px;background:#fffcd6"></div>
<div class="a" style="left:738px;top:70px;width:1px;height:24px;background:#c4c4c4"></div>
<div class="a" style="left:663px;top:93px;width:76px;height:1px;background:#c4c4c4"></div>
<div class="t" style="left:671px;top:76px;font-size:10.7px;color:#000;letter-spacing:-0.4px">1-COB CAR</div>
<div class="a" style="left:739px;top:70px;width:86px;height:23px;background:#fffcd6"></div>
<div class="a" style="left:825px;top:70px;width:1px;height:24px;background:#c4c4c4"></div>
<div class="a" style="left:739px;top:93px;width:87px;height:1px;background:#c4c4c4"></div>
<div class="t" style="left:741px;top:76px;font-size:10.7px;color:#000;">NE /</div>
<div class="t" style="left:739px;width:74px;text-align:right;top:76px;font-size:10.7px;color:#000;">123.456</div>
<div class="a" style="left:826px;top:70px;width:86px;height:23px;background:#fffcd6"></div>
<div class="a" style="left:912px;top:70px;width:1px;height:24px;background:#c4c4c4"></div>
<div class="a" style="left:826px;top:93px;width:87px;height:1px;background:#c4c4c4"></div>
<div class="a" style="left:913px;top:70px;width:97px;height:23px;background:#fffcd6"></div>
<div class="a" style="left:1010px;top:70px;width:1px;height:24px;background:#c4c4c4"></div>
<div class="a" style="left:913px;top:93px;width:98px;height:1px;background:#c4c4c4"></div>
<div class="a" style="left:1011px;top:70px;width:82px;height:23px;background:#fffcd6"></div>
<div class="a" style="left:1093px;top:70px;width:1px;height:24px;background:#c4c4c4"></div>
<div class="a" style="left:1011px;top:93px;width:83px;height:1px;background:#c4c4c4"></div>
<div class="a" style="left:1094px;top:70px;width:86px;height:23px;background:#fffcd6"></div>
<div class="a" style="left:1180px;top:70px;width:1px;height:24px;background:#c4c4c4"></div>
<div class="a" style="left:1094px;top:93px;width:87px;height:1px;background:#c4c4c4"></div>
<div class="a" style="left:1181px;top:70px;width:95px;height:23px;background:#fffcd6"></div>
<div class="a" style="left:1276px;top:70px;width:1px;height:24px;background:#c4c4c4"></div>
<div class="a" style="left:1181px;top:93px;width:96px;height:1px;background:#c4c4c4"></div>
<div class="t" style="left:1184px;top:76px;font-size:10.7px;color:#000;letter-spacing:0.4px">10/01/19</div>
<div class="a" style="left:0px;top:94px;width:84px;height:23px;background:#e9ecf0;border-left:2px solid #fff;border-top:2px solid #fff;border-right:1px solid #a0a0a0;border-bottom:1px solid #a0a0a0"></div>
<div class="a" style="left:84px;top:94px;width:1px;height:24px;background:#6e6e6e"></div>
<div class="a" style="left:0px;top:117px;width:85px;height:1px;background:#6e6e6e"></div>
<div class="t" style="left:13px;top:101px;font-size:10.7px;color:#000;">123456-02</div>
<div class="a" style="left:85px;top:94px;width:191px;height:23px;background:#ffffff"></div>
<div class="a" style="left:276px;top:94px;width:1px;height:24px;background:#c4c4c4"></div>
<div class="a" style="left:85px;top:117px;width:192px;height:1px;background:#c4c4c4"></div>
<div class="t" style="left:85px;width:191px;text-align:center;top:100px;font-size:10.7px;color:#000;letter-spacing:-0.1px">1.298-RECH INFORMATICA LTDA.</div>
<div class="a" style="left:277px;top:94px;width:37px;height:23px;background:#ffffff"></div>
<div class="a" style="left:314px;top:94px;width:1px;height:24px;background:#c4c4c4"></div>
<div class="a" style="left:277px;top:117px;width:38px;height:1px;background:#c4c4c4"></div>
<div class="t" style="left:279px;top:100px;font-size:10.7px;color:#000;">MOU</div>
<div class="a" style="left:315px;top:94px;width:22px;height:23px;background:#ffffff"></div>
<div class="a" style="left:337px;top:94px;width:1px;height:24px;background:#c4c4c4"></div>
<div class="a" style="left:315px;top:117px;width:23px;height:1px;background:#c4c4c4"></div>
<div class="t" style="left:317px;top:100px;font-size:10.7px;color:#000;">O</div>
<div class="a" style="left:338px;top:94px;width:31px;height:23px;background:#ffffff"></div>
<div class="a" style="left:369px;top:94px;width:1px;height:24px;background:#c4c4c4"></div>
<div class="a" style="left:338px;top:117px;width:32px;height:1px;background:#c4c4c4"></div>
<div class="t" style="left:340px;top:100px;font-size:10.7px;color:#000;">DS</div>
<div class="a" style="left:370px;top:94px;width:83px;height:23px;background:#ffffff"></div>
<div class="a" style="left:453px;top:94px;width:1px;height:24px;background:#c4c4c4"></div>
<div class="a" style="left:370px;top:117px;width:84px;height:1px;background:#c4c4c4"></div>
<div class="t" style="left:370px;width:81px;text-align:right;top:100px;font-size:10.7px;color:#000;letter-spacing:0.2px">1.000,00</div>
<div class="a" style="left:454px;top:94px;width:59px;height:23px;background:#ffffff"></div>
<div class="a" style="left:513px;top:94px;width:1px;height:24px;background:#c4c4c4"></div>
<div class="a" style="left:454px;top:117px;width:60px;height:1px;background:#c4c4c4"></div>
<div class="t" style="left:456px;top:100px;font-size:10.7px;color:#000;letter-spacing:0.4px">01/01/19</div>
<div class="a" style="left:514px;top:94px;width:58px;height:23px;background:#ffffff"></div>
<div class="a" style="left:572px;top:94px;width:1px;height:24px;background:#c4c4c4"></div>
<div class="a" style="left:514px;top:117px;width:59px;height:1px;background:#c4c4c4"></div>
<div class="t" style="left:517px;top:100px;font-size:10.7px;color:#000;letter-spacing:0.4px">10/02/19</div>
<div class="a" style="left:573px;top:94px;width:55px;height:23px;background:#ffffff"></div>
<div class="a" style="left:628px;top:94px;width:1px;height:24px;background:#c4c4c4"></div>
<div class="a" style="left:573px;top:117px;width:56px;height:1px;background:#c4c4c4"></div>
<div class="a" style="left:629px;top:94px;width:33px;height:23px;background:#ffffff"></div>
<div class="a" style="left:662px;top:94px;width:1px;height:24px;background:#c4c4c4"></div>
<div class="a" style="left:629px;top:117px;width:34px;height:1px;background:#c4c4c4"></div>
<div class="t" style="left:629px;width:31px;text-align:right;top:100px;font-size:10.7px;color:#000;">38</div>
<div class="a" style="left:663px;top:94px;width:75px;height:23px;background:#ffffff"></div>
<div class="a" style="left:738px;top:94px;width:1px;height:24px;background:#c4c4c4"></div>
<div class="a" style="left:663px;top:117px;width:76px;height:1px;background:#c4c4c4"></div>
<div class="t" style="left:671px;top:100px;font-size:10.7px;color:#000;letter-spacing:-0.4px">1-COB CAR</div>
<div class="a" style="left:739px;top:94px;width:86px;height:23px;background:#ffffff"></div>
<div class="a" style="left:825px;top:94px;width:1px;height:24px;background:#c4c4c4"></div>
<div class="a" style="left:739px;top:117px;width:87px;height:1px;background:#c4c4c4"></div>
<div class="t" style="left:741px;top:100px;font-size:10.7px;color:#000;">NE /</div>
<div class="t" style="left:739px;width:74px;text-align:right;top:100px;font-size:10.7px;color:#000;">123.456</div>
<div class="a" style="left:826px;top:94px;width:86px;height:23px;background:#ffffff"></div>
<div class="a" style="left:912px;top:94px;width:1px;height:24px;background:#c4c4c4"></div>
<div class="a" style="left:826px;top:117px;width:87px;height:1px;background:#c4c4c4"></div>
<div class="a" style="left:913px;top:94px;width:97px;height:23px;background:#ffffff"></div>
<div class="a" style="left:1010px;top:94px;width:1px;height:24px;background:#c4c4c4"></div>
<div class="a" style="left:913px;top:117px;width:98px;height:1px;background:#c4c4c4"></div>
<div class="a" style="left:1011px;top:94px;width:82px;height:23px;background:#ffffff"></div>
<div class="a" style="left:1093px;top:94px;width:1px;height:24px;background:#c4c4c4"></div>
<div class="a" style="left:1011px;top:117px;width:83px;height:1px;background:#c4c4c4"></div>
<div class="a" style="left:1094px;top:94px;width:86px;height:23px;background:#ffffff"></div>
<div class="a" style="left:1180px;top:94px;width:1px;height:24px;background:#c4c4c4"></div>
<div class="a" style="left:1094px;top:117px;width:87px;height:1px;background:#c4c4c4"></div>
<div class="a" style="left:1181px;top:94px;width:95px;height:23px;background:#ffffff"></div>
<div class="a" style="left:1276px;top:94px;width:1px;height:24px;background:#c4c4c4"></div>
<div class="a" style="left:1181px;top:117px;width:96px;height:1px;background:#c4c4c4"></div>
<div class="t" style="left:1184px;top:100px;font-size:10.7px;color:#000;letter-spacing:0.4px">11/02/19</div>
<div class="a" style="left:0px;top:118px;width:84px;height:23px;background:#e9ecf0;border-left:2px solid #fff;border-top:2px solid #fff;border-right:1px solid #a0a0a0;border-bottom:1px solid #a0a0a0"></div>
<div class="a" style="left:84px;top:118px;width:1px;height:24px;background:#6e6e6e"></div>
<div class="a" style="left:0px;top:141px;width:85px;height:1px;background:#6e6e6e"></div>
<div class="t" style="left:13px;top:125px;font-size:10.7px;color:#000;">123456-03</div>
<div class="a" style="left:85px;top:118px;width:191px;height:23px;background:#fffcd6"></div>
<div class="a" style="left:276px;top:118px;width:1px;height:24px;background:#c4c4c4"></div>
<div class="a" style="left:85px;top:141px;width:192px;height:1px;background:#c4c4c4"></div>
<div class="t" style="left:85px;width:191px;text-align:center;top:124px;font-size:10.7px;color:#000;letter-spacing:-0.1px">1.298-RECH INFORMATICA LTDA.</div>
<div class="a" style="left:277px;top:118px;width:37px;height:23px;background:#fffcd6"></div>
<div class="a" style="left:314px;top:118px;width:1px;height:24px;background:#c4c4c4"></div>
<div class="a" style="left:277px;top:141px;width:38px;height:1px;background:#c4c4c4"></div>
<div class="t" style="left:279px;top:124px;font-size:10.7px;color:#000;">MOU</div>
<div class="a" style="left:315px;top:118px;width:22px;height:23px;background:#fffcd6"></div>
<div class="a" style="left:337px;top:118px;width:1px;height:24px;background:#c4c4c4"></div>
<div class="a" style="left:315px;top:141px;width:23px;height:1px;background:#c4c4c4"></div>
<div class="t" style="left:317px;top:124px;font-size:10.7px;color:#000;">O</div>
<div class="a" style="left:338px;top:118px;width:31px;height:23px;background:#fffcd6"></div>
<div class="a" style="left:369px;top:118px;width:1px;height:24px;background:#c4c4c4"></div>
<div class="a" style="left:338px;top:141px;width:32px;height:1px;background:#c4c4c4"></div>
<div class="t" style="left:340px;top:124px;font-size:10.7px;color:#000;">DS</div>
<div class="a" style="left:370px;top:118px;width:83px;height:23px;background:#fffcd6"></div>
<div class="a" style="left:453px;top:118px;width:1px;height:24px;background:#c4c4c4"></div>
<div class="a" style="left:370px;top:141px;width:84px;height:1px;background:#c4c4c4"></div>
<div class="t" style="left:370px;width:81px;text-align:right;top:124px;font-size:10.7px;color:#000;letter-spacing:0.2px">1.000,00</div>
<div class="a" style="left:454px;top:118px;width:59px;height:23px;background:#fffcd6"></div>
<div class="a" style="left:513px;top:118px;width:1px;height:24px;background:#c4c4c4"></div>
<div class="a" style="left:454px;top:141px;width:60px;height:1px;background:#c4c4c4"></div>
<div class="t" style="left:456px;top:124px;font-size:10.7px;color:#000;letter-spacing:0.4px">01/01/19</div>
<div class="a" style="left:514px;top:118px;width:58px;height:23px;background:#fffcd6"></div>
<div class="a" style="left:572px;top:118px;width:1px;height:24px;background:#c4c4c4"></div>
<div class="a" style="left:514px;top:141px;width:59px;height:1px;background:#c4c4c4"></div>
<div class="t" style="left:517px;top:124px;font-size:10.7px;color:#000;letter-spacing:0.4px">10/03/19</div>
<div class="a" style="left:573px;top:118px;width:55px;height:23px;background:#fffcd6"></div>
<div class="a" style="left:628px;top:118px;width:1px;height:24px;background:#c4c4c4"></div>
<div class="a" style="left:573px;top:141px;width:56px;height:1px;background:#c4c4c4"></div>
<div class="a" style="left:629px;top:118px;width:33px;height:23px;background:#fffcd6"></div>
<div class="a" style="left:662px;top:118px;width:1px;height:24px;background:#c4c4c4"></div>
<div class="a" style="left:629px;top:141px;width:34px;height:1px;background:#c4c4c4"></div>
<div class="t" style="left:629px;width:31px;text-align:right;top:124px;font-size:10.7px;color:#000;">10</div>
<div class="a" style="left:663px;top:118px;width:75px;height:23px;background:#fffcd6"></div>
<div class="a" style="left:738px;top:118px;width:1px;height:24px;background:#c4c4c4"></div>
<div class="a" style="left:663px;top:141px;width:76px;height:1px;background:#c4c4c4"></div>
<div class="t" style="left:671px;top:124px;font-size:10.7px;color:#000;letter-spacing:-0.4px">1-COB CAR</div>
<div class="a" style="left:739px;top:118px;width:86px;height:23px;background:#fffcd6"></div>
<div class="a" style="left:825px;top:118px;width:1px;height:24px;background:#c4c4c4"></div>
<div class="a" style="left:739px;top:141px;width:87px;height:1px;background:#c4c4c4"></div>
<div class="t" style="left:741px;top:124px;font-size:10.7px;color:#000;">NE /</div>
<div class="t" style="left:739px;width:74px;text-align:right;top:124px;font-size:10.7px;color:#000;">123.456</div>
<div class="a" style="left:826px;top:118px;width:86px;height:23px;background:#fffcd6"></div>
<div class="a" style="left:912px;top:118px;width:1px;height:24px;background:#c4c4c4"></div>
<div class="a" style="left:826px;top:141px;width:87px;height:1px;background:#c4c4c4"></div>
<div class="a" style="left:913px;top:118px;width:97px;height:23px;background:#fffcd6"></div>
<div class="a" style="left:1010px;top:118px;width:1px;height:24px;background:#c4c4c4"></div>
<div class="a" style="left:913px;top:141px;width:98px;height:1px;background:#c4c4c4"></div>
<div class="a" style="left:1011px;top:118px;width:82px;height:23px;background:#fffcd6"></div>
<div class="a" style="left:1093px;top:118px;width:1px;height:24px;background:#c4c4c4"></div>
<div class="a" style="left:1011px;top:141px;width:83px;height:1px;background:#c4c4c4"></div>
<div class="a" style="left:1094px;top:118px;width:86px;height:23px;background:#fffcd6"></div>
<div class="a" style="left:1180px;top:118px;width:1px;height:24px;background:#c4c4c4"></div>
<div class="a" style="left:1094px;top:141px;width:87px;height:1px;background:#c4c4c4"></div>
<div class="a" style="left:1181px;top:118px;width:95px;height:23px;background:#fffcd6"></div>
<div class="a" style="left:1276px;top:118px;width:1px;height:24px;background:#c4c4c4"></div>
<div class="a" style="left:1181px;top:141px;width:96px;height:1px;background:#c4c4c4"></div>
<div class="t" style="left:1184px;top:124px;font-size:10.7px;color:#000;letter-spacing:0.4px">11/03/19</div>
<div class="a" style="left:0px;top:142px;width:84px;height:23px;background:#e9ecf0;border-left:2px solid #fff;border-top:2px solid #fff;border-right:1px solid #a0a0a0;border-bottom:1px solid #a0a0a0"></div>
<div class="a" style="left:84px;top:142px;width:1px;height:24px;background:#6e6e6e"></div>
<div class="a" style="left:0px;top:165px;width:85px;height:1px;background:#6e6e6e"></div>
<div class="t" style="left:13px;top:149px;font-size:10.7px;color:#000;">123456-04</div>
<div class="a" style="left:85px;top:142px;width:191px;height:23px;background:#ffffff"></div>
<div class="a" style="left:276px;top:142px;width:1px;height:24px;background:#c4c4c4"></div>
<div class="a" style="left:85px;top:165px;width:192px;height:1px;background:#c4c4c4"></div>
<div class="t" style="left:85px;width:191px;text-align:center;top:148px;font-size:10.7px;color:#000;letter-spacing:-0.1px">1.298-RECH INFORMATICA LTDA.</div>
<div class="a" style="left:277px;top:142px;width:37px;height:23px;background:#ffffff"></div>
<div class="a" style="left:314px;top:142px;width:1px;height:24px;background:#c4c4c4"></div>
<div class="a" style="left:277px;top:165px;width:38px;height:1px;background:#c4c4c4"></div>
<div class="t" style="left:279px;top:148px;font-size:10.7px;color:#000;">MOU</div>
<div class="a" style="left:315px;top:142px;width:22px;height:23px;background:#ffffff"></div>
<div class="a" style="left:337px;top:142px;width:1px;height:24px;background:#c4c4c4"></div>
<div class="a" style="left:315px;top:165px;width:23px;height:1px;background:#c4c4c4"></div>
<div class="t" style="left:317px;top:148px;font-size:10.7px;color:#000;">O</div>
<div class="a" style="left:338px;top:142px;width:31px;height:23px;background:#ffffff"></div>
<div class="a" style="left:369px;top:142px;width:1px;height:24px;background:#c4c4c4"></div>
<div class="a" style="left:338px;top:165px;width:32px;height:1px;background:#c4c4c4"></div>
<div class="t" style="left:340px;top:148px;font-size:10.7px;color:#000;">DS</div>
<div class="a" style="left:370px;top:142px;width:83px;height:23px;background:#ffffff"></div>
<div class="a" style="left:453px;top:142px;width:1px;height:24px;background:#c4c4c4"></div>
<div class="a" style="left:370px;top:165px;width:84px;height:1px;background:#c4c4c4"></div>
<div class="t" style="left:370px;width:81px;text-align:right;top:148px;font-size:10.7px;color:#000;letter-spacing:0.2px">1.000,00</div>
<div class="a" style="left:454px;top:142px;width:59px;height:23px;background:#ffffff"></div>
<div class="a" style="left:513px;top:142px;width:1px;height:24px;background:#c4c4c4"></div>
<div class="a" style="left:454px;top:165px;width:60px;height:1px;background:#c4c4c4"></div>
<div class="t" style="left:456px;top:148px;font-size:10.7px;color:#000;letter-spacing:0.4px">01/01/19</div>
<div class="a" style="left:514px;top:142px;width:58px;height:23px;background:#ffffff"></div>
<div class="a" style="left:572px;top:142px;width:1px;height:24px;background:#c4c4c4"></div>
<div class="a" style="left:514px;top:165px;width:59px;height:1px;background:#c4c4c4"></div>
<div class="t" style="left:517px;top:148px;font-size:10.7px;color:#000;letter-spacing:0.4px">10/04/19</div>
<div class="a" style="left:573px;top:142px;width:55px;height:23px;background:#ffffff"></div>
<div class="a" style="left:628px;top:142px;width:1px;height:24px;background:#c4c4c4"></div>
<div class="a" style="left:573px;top:165px;width:56px;height:1px;background:#c4c4c4"></div>
<div class="a" style="left:629px;top:142px;width:33px;height:23px;background:#ffffff"></div>
<div class="a" style="left:662px;top:142px;width:1px;height:24px;background:#c4c4c4"></div>
<div class="a" style="left:629px;top:165px;width:34px;height:1px;background:#c4c4c4"></div>
<div class="a" style="left:663px;top:142px;width:75px;height:23px;background:#ffffff"></div>
<div class="a" style="left:738px;top:142px;width:1px;height:24px;background:#c4c4c4"></div>
<div class="a" style="left:663px;top:165px;width:76px;height:1px;background:#c4c4c4"></div>
<div class="t" style="left:671px;top:148px;font-size:10.7px;color:#000;letter-spacing:-0.4px">1-COB CAR</div>
<div class="a" style="left:739px;top:142px;width:86px;height:23px;background:#ffffff"></div>
<div class="a" style="left:825px;top:142px;width:1px;height:24px;background:#c4c4c4"></div>
<div class="a" style="left:739px;top:165px;width:87px;height:1px;background:#c4c4c4"></div>
<div class="t" style="left:741px;top:148px;font-size:10.7px;color:#000;">NE /</div>
<div class="t" style="left:739px;width:74px;text-align:right;top:148px;font-size:10.7px;color:#000;">123.456</div>
<div class="a" style="left:826px;top:142px;width:86px;height:23px;background:#ffffff"></div>
<div class="a" style="left:912px;top:142px;width:1px;height:24px;background:#c4c4c4"></div>
<div class="a" style="left:826px;top:165px;width:87px;height:1px;background:#c4c4c4"></div>
<div class="a" style="left:913px;top:142px;width:97px;height:23px;background:#ffffff"></div>
<div class="a" style="left:1010px;top:142px;width:1px;height:24px;background:#c4c4c4"></div>
<div class="a" style="left:913px;top:165px;width:98px;height:1px;background:#c4c4c4"></div>
<div class="a" style="left:1011px;top:142px;width:82px;height:23px;background:#ffffff"></div>
<div class="a" style="left:1093px;top:142px;width:1px;height:24px;background:#c4c4c4"></div>
<div class="a" style="left:1011px;top:165px;width:83px;height:1px;background:#c4c4c4"></div>
<div class="a" style="left:1094px;top:142px;width:86px;height:23px;background:#ffffff"></div>
<div class="a" style="left:1180px;top:142px;width:1px;height:24px;background:#c4c4c4"></div>
<div class="a" style="left:1094px;top:165px;width:87px;height:1px;background:#c4c4c4"></div>
<div class="a" style="left:1181px;top:142px;width:95px;height:23px;background:#ffffff"></div>
<div class="a" style="left:1276px;top:142px;width:1px;height:24px;background:#c4c4c4"></div>
<div class="a" style="left:1181px;top:165px;width:96px;height:1px;background:#c4c4c4"></div>
<div class="t" style="left:1184px;top:148px;font-size:10.7px;color:#000;letter-spacing:0.4px">10/04/19</div>
<div class="a" style="left:0px;top:166px;width:84px;height:23px;background:#e9ecf0;border-left:2px solid #fff;border-top:2px solid #fff;border-right:1px solid #a0a0a0;border-bottom:1px solid #a0a0a0"></div>
<div class="a" style="left:84px;top:166px;width:1px;height:24px;background:#6e6e6e"></div>
<div class="a" style="left:0px;top:189px;width:85px;height:1px;background:#6e6e6e"></div>
<div class="t" style="left:13px;top:173px;font-size:10.7px;color:#000;">123456-05</div>
<div class="a" style="left:85px;top:166px;width:191px;height:23px;background:#fffcd6"></div>
<div class="a" style="left:276px;top:166px;width:1px;height:24px;background:#c4c4c4"></div>
<div class="a" style="left:85px;top:189px;width:192px;height:1px;background:#c4c4c4"></div>
<div class="t" style="left:85px;width:191px;text-align:center;top:172px;font-size:10.7px;color:#000;letter-spacing:-0.1px">1.298-RECH INFORMATICA LTDA.</div>
<div class="a" style="left:277px;top:166px;width:37px;height:23px;background:#fffcd6"></div>
<div class="a" style="left:314px;top:166px;width:1px;height:24px;background:#c4c4c4"></div>
<div class="a" style="left:277px;top:189px;width:38px;height:1px;background:#c4c4c4"></div>
<div class="t" style="left:279px;top:172px;font-size:10.7px;color:#000;">MOU</div>
<div class="a" style="left:315px;top:166px;width:22px;height:23px;background:#fffcd6"></div>
<div class="a" style="left:337px;top:166px;width:1px;height:24px;background:#c4c4c4"></div>
<div class="a" style="left:315px;top:189px;width:23px;height:1px;background:#c4c4c4"></div>
<div class="t" style="left:317px;top:172px;font-size:10.7px;color:#000;">O</div>
<div class="a" style="left:338px;top:166px;width:31px;height:23px;background:#fffcd6"></div>
<div class="a" style="left:369px;top:166px;width:1px;height:24px;background:#c4c4c4"></div>
<div class="a" style="left:338px;top:189px;width:32px;height:1px;background:#c4c4c4"></div>
<div class="t" style="left:340px;top:172px;font-size:10.7px;color:#000;">DS</div>
<div class="a" style="left:370px;top:166px;width:83px;height:23px;background:#fffcd6"></div>
<div class="a" style="left:453px;top:166px;width:1px;height:24px;background:#c4c4c4"></div>
<div class="a" style="left:370px;top:189px;width:84px;height:1px;background:#c4c4c4"></div>
<div class="t" style="left:370px;width:81px;text-align:right;top:172px;font-size:10.7px;color:#000;letter-spacing:0.2px">1.000,00</div>
<div class="a" style="left:454px;top:166px;width:59px;height:23px;background:#fffcd6"></div>
<div class="a" style="left:513px;top:166px;width:1px;height:24px;background:#c4c4c4"></div>
<div class="a" style="left:454px;top:189px;width:60px;height:1px;background:#c4c4c4"></div>
<div class="t" style="left:456px;top:172px;font-size:10.7px;color:#000;letter-spacing:0.4px">01/01/19</div>
<div class="a" style="left:514px;top:166px;width:58px;height:23px;background:#fffcd6"></div>
<div class="a" style="left:572px;top:166px;width:1px;height:24px;background:#c4c4c4"></div>
<div class="a" style="left:514px;top:189px;width:59px;height:1px;background:#c4c4c4"></div>
<div class="t" style="left:517px;top:172px;font-size:10.7px;color:#000;letter-spacing:0.4px">10/05/19</div>
<div class="a" style="left:573px;top:166px;width:55px;height:23px;background:#fffcd6"></div>
<div class="a" style="left:628px;top:166px;width:1px;height:24px;background:#c4c4c4"></div>
<div class="a" style="left:573px;top:189px;width:56px;height:1px;background:#c4c4c4"></div>
<div class="a" style="left:629px;top:166px;width:33px;height:23px;background:#fffcd6"></div>
<div class="a" style="left:662px;top:166px;width:1px;height:24px;background:#c4c4c4"></div>
<div class="a" style="left:629px;top:189px;width:34px;height:1px;background:#c4c4c4"></div>
<div class="a" style="left:663px;top:166px;width:75px;height:23px;background:#fffcd6"></div>
<div class="a" style="left:738px;top:166px;width:1px;height:24px;background:#c4c4c4"></div>
<div class="a" style="left:663px;top:189px;width:76px;height:1px;background:#c4c4c4"></div>
<div class="t" style="left:671px;top:172px;font-size:10.7px;color:#000;letter-spacing:-0.4px">1-COB CAR</div>
<div class="a" style="left:739px;top:166px;width:86px;height:23px;background:#fffcd6"></div>
<div class="a" style="left:825px;top:166px;width:1px;height:24px;background:#c4c4c4"></div>
<div class="a" style="left:739px;top:189px;width:87px;height:1px;background:#c4c4c4"></div>
<div class="t" style="left:741px;top:172px;font-size:10.7px;color:#000;">NE /</div>
<div class="t" style="left:739px;width:74px;text-align:right;top:172px;font-size:10.7px;color:#000;">123.456</div>
<div class="a" style="left:826px;top:166px;width:86px;height:23px;background:#fffcd6"></div>
<div class="a" style="left:912px;top:166px;width:1px;height:24px;background:#c4c4c4"></div>
<div class="a" style="left:826px;top:189px;width:87px;height:1px;background:#c4c4c4"></div>
<div class="a" style="left:913px;top:166px;width:97px;height:23px;background:#fffcd6"></div>
<div class="a" style="left:1010px;top:166px;width:1px;height:24px;background:#c4c4c4"></div>
<div class="a" style="left:913px;top:189px;width:98px;height:1px;background:#c4c4c4"></div>
<div class="a" style="left:1011px;top:166px;width:82px;height:23px;background:#fffcd6"></div>
<div class="a" style="left:1093px;top:166px;width:1px;height:24px;background:#c4c4c4"></div>
<div class="a" style="left:1011px;top:189px;width:83px;height:1px;background:#c4c4c4"></div>
<div class="a" style="left:1094px;top:166px;width:86px;height:23px;background:#fffcd6"></div>
<div class="a" style="left:1180px;top:166px;width:1px;height:24px;background:#c4c4c4"></div>
<div class="a" style="left:1094px;top:189px;width:87px;height:1px;background:#c4c4c4"></div>
<div class="a" style="left:1181px;top:166px;width:95px;height:23px;background:#fffcd6"></div>
<div class="a" style="left:1276px;top:166px;width:1px;height:24px;background:#c4c4c4"></div>
<div class="a" style="left:1181px;top:189px;width:96px;height:1px;background:#c4c4c4"></div>
<div class="t" style="left:1184px;top:172px;font-size:10.7px;color:#000;letter-spacing:0.4px">10/05/19</div>
</div>
<div class="a" style="left:13px;top:441px;width:1216px;height:16px;background:#f0f0f0"></div>
<div class="a" style="left:115px;top:441px;width:874px;height:15px;background:#cdcdcd"></div>
<svg class="a" style="left:103px;top:445px" width="7" height="7" viewBox="0 0 7 7"><path d="M5.8 0.8 L1.4 3.5 L5.8 6.2" stroke="#585858" stroke-width="2" fill="none"/></svg>
<svg class="a" style="left:1218px;top:445px" width="7" height="7" viewBox="0 0 7 7"><path d="M0.6 0.8 L5 3.5 L0.6 6.2" stroke="#585858" stroke-width="2" fill="none"/></svg>
<div class="a" style="left:1229px;top:129px;width:2px;height:330px;background:#fff"></div>
<div class="a" style="left:12px;top:457px;width:1219px;height:2px;background:#fff"></div>
<div class="a" style="left:1232px;top:127px;width:19px;height:330px;background:#f0f0f0"></div>
<div class="a" style="left:1233px;top:128px;width:17px;height:81px;border:1px solid #a0a0a0;background:#e1e1e1"></div>
<div class="a" style="left:1233px;top:211px;width:17px;height:80px;border:1px solid #a0a0a0;background:#e1e1e1"></div>
<div class="a" style="left:1233px;top:293px;width:17px;height:80px;border:1px solid #a0a0a0;background:#e1e1e1"></div>
<div class="a" style="left:1233px;top:375px;width:17px;height:81px;border:1px solid #a0a0a0;background:#e1e1e1"></div>
<svg class="a" style="left:1238px;top:162px" width="8" height="12" viewBox="0 0 8 12"><rect x="0" y="0" width="7" height="2" fill="#000"/><path d="M0 7 L3.5 2.8 L7 7 Z M0 12 L3.5 7.8 L7 12 Z" fill="#000"/></svg>
<svg class="a" style="left:1238px;top:246px" width="8" height="9" viewBox="0 0 8 9"><path d="M0 4.2 L3.5 0 L7 4.2 Z M0 9 L3.5 4.8 L7 9 Z" fill="#000"/></svg>
<svg class="a" style="left:1238px;top:329px" width="8" height="9" viewBox="0 0 8 9"><path d="M0 0 L3.5 4.2 L7 0 Z M0 4.8 L3.5 9 L7 4.8 Z" fill="#000"/></svg>
<svg class="a" style="left:1238px;top:409px" width="8" height="12" viewBox="0 0 8 12"><path d="M0 0 L3.5 4.2 L7 0 Z M0 5 L3.5 9.2 L7 5 Z" fill="#000"/><rect x="0" y="10" width="7" height="2" fill="#000"/></svg>
<div class="t" style="left:11px;top:460px;font-size:11.5px;font-weight:bold;color:#000">Observações</div>
<div class="a" style="left:11px;top:473px;width:1240px;height:76px;border:1px solid #3c3c3c;background:#ffffe6"></div>
<div class="a" style="left:1233px;top:474px;width:17px;height:74px;background:#f0f0f0"></div>
<svg class="a" style="left:1238px;top:480px" width="7" height="6" viewBox="0 0 7 6"><path d="M0.7 5.3 L3.5 1.4 L6.3 5.3" stroke="#585858" stroke-width="2" fill="none"/></svg>
<svg class="a" style="left:1238px;top:537px" width="7" height="6" viewBox="0 0 7 6"><path d="M0.7 0.7 L3.5 4.6 L6.3 0.7" stroke="#585858" stroke-width="2" fill="none"/></svg>
<div class="t" style="left:15px;top:491px;font-family:'Liberation Mono',monospace;font-size:11.67px;line-height:13.5px;color:#000;white-space:pre">Loc.Cobrança: CARTEIRA
Origem doc.: Notas do financeiro Sigla: MOU Indefinido</div>
<div class="t" style="left:13px;top:555px;font-size:12.3px;font-weight:bold;color:#000080">Registro alterado em 20/03/2019 às 08:52:06</div>
<div class="a" style="left:928px;top:575px;width:6px;height:1px;background:#2a2a3a"></div>
<div class="a" style="left:936px;top:575px;width:5px;height:1px;background:#2a2a3a"></div>
<div class="a" style="left:941px;top:575px;width:3px;height:1px;background:#2a2a3a"></div>
<div class="a" style="left:946px;top:575px;width:3px;height:1px;background:#2a2a3a"></div>
<div class="a" style="left:950px;top:575px;width:6px;height:1px;background:#2a2a3a"></div>
<div class="a" style="left:959px;top:575px;width:5px;height:1px;background:#2a2a3a"></div>
<div class="a" style="left:98px;top:575px;width:2px;height:1px;background:#5a7a9a"></div>
</body></html>
